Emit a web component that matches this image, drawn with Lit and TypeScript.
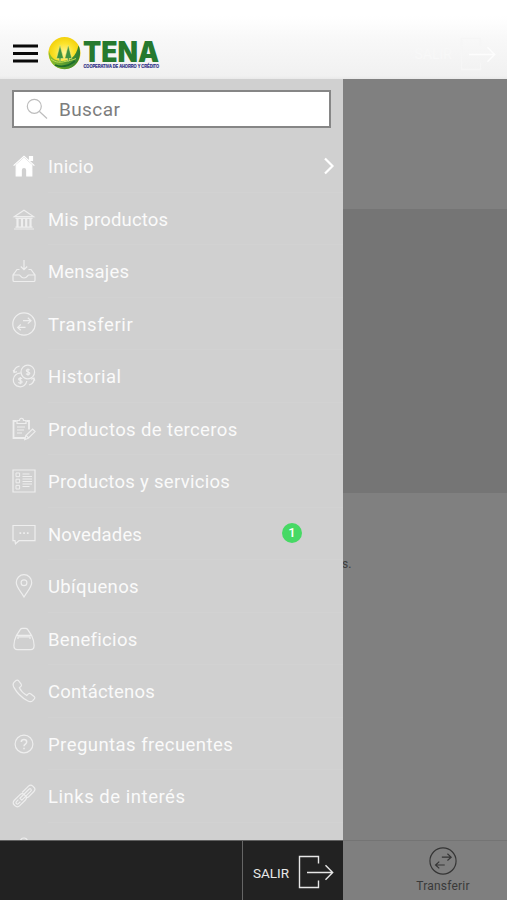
import { LitElement, html, svg, css, nothing, SVGTemplateResult } from "lit";
import { customElement, property } from "lit/decorators.js";

const transferIcon = svg`<circle cx="12" cy="12" r="11.2"/><path d="M11 8.700h8M15.800 5.800l3.200 2.900-3.200 2.900M13.500 15.400H5.600M8.800 12.500l-3.200 2.900 3.200 2.900"/>`;

const icons: Record<string, SVGTemplateResult> = {
  home: svg`<path d="M17.5 2.5h3v4h-3z" fill="currentColor"/><path d="M4.2 11.3 12 4.4l7.8 6.9V21.800h-5v-5.600c0-3.600-5.600-3.600-5.600 0v5.600H4.200z" fill="currentColor"/><path d="M1.600 11.600 12 2.300l10.400 9.300"/>`,
  bank: svg`<path d="M2.500 9.600 12 3.300l9.500 6.300zM2 22h20M3.500 20.200h17M3.500 11.300h17"/><path d="M5.500 11.500v8.500M10 11.500v8.500M14.200 11.500v8.500M18.500 11.500v8.500" stroke-width="2.200"/>`,
  inbox: svg`<path d="M12 1v9.500M8.800 7.500l3.200 3.200 3.200-3.200M7.500 10.500H5L1 16v5.200c0 .8.600 1.300 1.300 1.300h19.400c.8 0 1.300-.5 1.300-1.300V16l-4-5.500h-2.500M1 16h6.500c.8 0 1.500 3 4.500 3s3.700-3 4.500-3H23"/>`,
  transfer: transferIcon,
  history: svg`<circle cx="15.800" cy="8" r="6.800"/><path d="M8.700 9.200A6.800 6.800 0 1 0 14.800 17M2 8.500C2 5.500 4 3 7.500 2.200M1.300 6 2 8.600l3-1M22 14c.3 3.300-1.700 6-5 7M22.800 16.600 22 14l-2.800 1.200"/><path d="M17.700 6.200c-.8-1-3.400-1-3.400.5s3.500 1 3.500 2.600-2.800 1.600-3.800.4M16 4.500v7.200M10 14.800c-.8-1-3.400-1-3.400.5s3.500 1 3.500 2.600-2.800 1.600-3.800.4M8.300 13v7.200" stroke-width="1.200"/>`,
  clipboard: svg`<path d="M4.500 4H1.500v17h12M14.500 4h2.500v8.500" stroke-width="1.800"/><path d="M5 6.500v-3h2.500c0-3 4-3 4 0H14v3zM5 10h8M5 13h7M5 16h5M12.800 22.500l1-4 6.800-6.500 2.500 2.600-6.800 6.700zM14.200 18.500l2.200 2.400"/>`,
  list: svg`<path d="M1 1h22v22H1z"/><path d="M4 4h3.600v3.600H4zM4 10.200h3.600v3.600H4zM4 16.400h3.600V20H4zM10.500 5h7M10.500 7.500h9.500M10.500 10h9.500M10.500 12.500h9.500M10.500 15h9.500M10.500 17.500h7" stroke-width="1"/>`,
  chat: svg`<path d="M1 3.500h22v15.200H7L3.500 21.800 3 18.700H1z"/><path d="M7.500 11.200h1.700M11.200 11.200h1.700M14.900 11.200h1.700" stroke-width="1.700"/>`,
  pin: svg`<path d="M12 23C9 17.500 4.300 13.200 4.300 8.400a7.700 7.700 0 0 1 15.400 0c0 4.800-4.700 9.100-7.700 14.600z"/><circle cx="12" cy="8.700" r="2.900"/>`,
  bag: svg`<path d="M4.500 8.300h15c1.300 2.700 2.600 7 2.600 10.200 0 2.800-1.200 4.200-3.400 4.200H5.300c-2.200 0-3.400-1.400-3.400-4.200 0-3.200 1.300-7.500 2.600-10.200zM4.500 8.300 8.200 2.600c.6-.9 1.300-1.200 2.300-1.200h3c1 0 1.700.3 2.300 1.200l3.700 5.700M6 12V9.800h12V12"/>`,
  phone: svg`<path d="M2.200 3.100 4 1.500c.8-.7 1.800-.6 2.500.2l2.600 3.500c.5.800.4 1.700-.3 2.300L7.300 8.800c1.500 3 4.300 5.800 7.500 7.600l1.500-1.500c.7-.6 1.500-.7 2.300-.1l3.500 2.600c.8.600.9 1.700.2 2.500l-1.800 1.900c-1.400 1.400-3.400.9-5-.1C9.500 18.500 4.900 13.900 1.800 8.100 1 6.500.9 4.400 2.200 3.100z"/>`,
  help: svg`<circle cx="12" cy="12" r="8.900"/><path d="M9.300 10.100c0-3.400 5.400-3.400 5.400 0 0 2-2.700 2-2.700 4.200M12 15.800v1.500" stroke-width="1.500"/>`,
  link: svg`<g transform="rotate(-45 12 12)"><rect x="-1.200" y="8.200" width="14.400" height="7.600" rx="3"/><path d="M5.500 10.600H2.700c-1.900 0-1.900 2.800 0 2.800h2.800"/><path d="M13.200 8.200h9c2 0 3 1.200 3 3v1.600c0 1.800-1 3-3 3h-7.400c-1 0-1.700-.4-2.200-1"/><path d="M7.500 10.700h12.800c1.900 0 1.900 2.700 0 2.700H7.500z"/></g>`,
  lock: svg`<path d="M8.500 9V4.500a3.500 3.500 0 0 1 7 0V9M4 9h16v13H4z"/>`,
};

interface Entry { label: string; icon: string; spacing: number; badge?: number; open?: boolean }

const entries: Entry[] = [
  { label: "Inicio", icon: "home", spacing: 0.2, open: true },
  { label: "Mis productos", icon: "bank", spacing: 0.17 },
  { label: "Mensajes", icon: "inbox", spacing: 0.2 },
  { label: "Transferir", icon: "transfer", spacing: 0.62 },
  { label: "Historial", icon: "history", spacing: 0.5 },
  { label: "Productos de terceros", icon: "clipboard", spacing: 0.38 },
  { label: "Productos y servicios", icon: "list", spacing: 0.29 },
  { label: "Novedades", icon: "chat", spacing: 0.17, badge: 1 },
  { label: "Ubíquenos", icon: "pin", spacing: 0.35 },
  { label: "Beneficios", icon: "bag", spacing: 0.3 },
  { label: "Contáctenos", icon: "phone", spacing: 0.2 },
  { label: "Preguntas frecuentes", icon: "help", spacing: 0.45 },
  { label: "Links de interés", icon: "link", spacing: 0.53 },
  { label: "", icon: "lock", spacing: 0 },
];

@customElement("menu-row")
class MenuRow extends LitElement {
  @property({ attribute: false }) entry!: Entry;

  static styles = css`
    :host { display: flex; align-items: center; height: 52.5px; flex: none; padding-left: 12px; color: #fafafa; }
    .icon { width: 24px; height: 24px; flex: none; fill: none; stroke: currentColor; stroke-width: 1.2; color: #eee; }
    .solid { color: #fff; }
    .cell { flex: 1; align-self: stretch; margin-left: 12px; display: flex; align-items: center; border-bottom: 1px solid #d2d2d2; box-sizing: border-box; }
    .label { font-size: 18.5px; line-height: 24px; padding-top: 2.5px; white-space: nowrap; flex: 1; }
    .badge { width: 20px; height: 20px; border-radius: 50%; background: #46d964; font-size: 13px; line-height: 20px; text-align: center; font-weight: 500; color: #fff; margin-right: 41px; }
    .chevron { width: 12px; height: 18px; margin-right: 8px; fill: none; stroke: #fff; stroke-width: 2.2; }
  `;

  render() {
    const e = this.entry;
    return html`
      <svg class="icon ${e.open ? "solid" : ""}" viewBox="0 0 24 24">${icons[e.icon]}</svg>
      <div class="cell">
        <span class="label" style="letter-spacing:${e.spacing}px">${e.label}</span>
        ${e.badge ? html`<span class="badge">${e.badge}</span>` : nothing}
        ${e.open ? html`<svg class="chevron" viewBox="0 0 12 18"><path d="M2 1.500 9.500 9 2 16.500"/></svg>` : nothing}
      </div>`;
  }
}

@customElement("app-root")
class AppRoot extends LitElement {
  static styles = css`
    :host { display: grid; grid-template-rows: 79px 761px 60px; grid-template-columns: 343px 1fr; width: 507px; height: 900px; overflow: hidden; font-family: Roboto, "Liberation Sans", sans-serif; }
    .header { grid-column: 1 / 3; box-sizing: border-box; display: flex; align-items: flex-start; padding: 36px 11px 0 13px; background: linear-gradient(#fff 20%, #f8f8f8 50%, #f1f1f1 96%, #e9e9e9); }
    .burger { width: 25px; height: 19px; margin-top: 8px; fill: none; stroke: #0a0a0a; stroke-width: 2.800; }
    .logo { width: 112px; height: 36px; margin-left: 10px; overflow: visible; }
    .ghost { margin-left: auto; display: flex; align-items: center; gap: 8px; height: 36px; color: #f8f8f8; font-size: 14px; }
    .ghost svg { width: 36px; height: 34px; fill: none; stroke: #f6f6f6; stroke-width: 1.400; }
    .ghost .arrow { stroke: #fdfdfd; }
    .drawer { background: #d0d0d0; overflow: hidden; display: flex; flex-direction: column; }
    .search { flex: none; box-sizing: border-box; width: 319px; height: 38px; margin: 10.500px 0 12.500px 12px; background: #fff; border: 2px solid #868686; display: flex; align-items: center; padding-left: 12px; color: #7d7d7d; font-size: 19px; letter-spacing: .4px; }
    .search span { padding-top: 1px; }
    .search svg { width: 22px; height: 22px; margin-right: 11px; fill: none; stroke: #bdbdbd; stroke-width: 1.200; }
    .backdrop { display: grid; grid-template-rows: 130px 284px 1fr; background: #808080; overflow: hidden; }
    .banner { background: #757575; grid-row: 2; }
    .note { grid-row: 3; padding-top: 64px; margin-left: -1px; font-size: 12px; line-height: 14px; color: #3e3e3e; }
    .exit { background: #222; border-top: 1px solid #606060; display: flex; justify-content: flex-end; box-sizing: border-box; }
    .button { width: 101px; box-sizing: border-box; border-left: 1px solid #666; display: flex; align-items: center; padding: 3px 0 0 10px; color: #e8e8e8; font-size: 13.500px; letter-spacing: 0; }
    .button span { padding-top: 2px; width: 36px; }
    .button svg { width: 36px; height: 34px; margin-left: 9px; fill: none; stroke: #e6e6e6; stroke-width: 1.400; }
    .tab { border-top: 1px solid #747474; box-sizing: border-box; background: #7f7f7f; color: #3a3a3a; display: flex; flex-direction: column; align-items: center; padding: 6px 0 0 36px; font-size: 12px; line-height: 14px; letter-spacing: .2px; }
    .tab svg { width: 28px; height: 28px; fill: none; stroke: #353535; stroke-width: 1; margin-bottom: 4px; }
  `;

  private exitIcon() {
    return html`<svg viewBox="0 0 36 34"><path d="M20.500 8.500V1.500h-19v31h19v-7"/><path class="arrow" d="M9 17.500h25.500M27.500 10.200l7.200 7.300-7.200 7.300"/></svg>`;
  }

  render() {
    return html`
      <div class="header">
        <svg class="burger" viewBox="0 0 25 19"><path d="M0 2h25M0 9.500h25M0 17h25"/></svg>
        <svg class="logo" viewBox="0 0 112 36">
          <defs>
            <linearGradient id="leaf" x1="0" x2="1"><stop offset="0" stop-color="#8fc02c"/><stop offset="1" stop-color="#2c7d34"/></linearGradient>
            <radialGradient id="sun"><stop offset="0" stop-color="#fff59a"/><stop offset=".6" stop-color="#fbe32b"/><stop offset="1" stop-color="#f3d10d"/></radialGradient>
          </defs>
          <circle cx="16.500" cy="17" r="16" fill="url(#sun)"/>
          <path d="M.8 14.500C2.500 21 6 25 14 25c8 0 14-4 16.500-15.500C35 19 30 33 16.500 33.200 6.500 33-.2 25 .8 14.500z" fill="url(#leaf)"/>
          <path d="M3 23c5 4 10 3.500 14 2.500s7-1 11-3" fill="none" stroke="#c6de55" stroke-width="1"/>
          <path d="M12 9 8.500 22.500h2.700v2.500h1.600v-2.500h2.700zM20.300 9l-3.500 13.500h2.700v2.500h1.600v-2.500h2.700z" fill="#3f9440" stroke="#f5ec85" stroke-width=".5"/>
          <path d="M7 29c6 2.500 13 1.500 20-4" fill="none" stroke="#1d6c2d" stroke-width="1.600"/>
          <text x="35" y="26.300" font-family="Inter" font-weight="900" font-size="28" fill="#26792f" textLength="76" lengthAdjust="spacingAndGlyphs">TENA</text>
          <text x="35.500" y="32" font-family="Liberation Sans" font-weight="700" font-size="4.800" fill="#2b2c83" stroke="#2b2c83" stroke-width=".2" textLength="75.500" lengthAdjust="spacingAndGlyphs">COOPERATIVA DE AHORRO Y CRÉDITO</text>
        </svg>
        <div class="ghost"><span>SALIR</span>${this.exitIcon()}</div>
      </div>
      <div class="drawer">
        <div class="search">
          <svg viewBox="0 0 22 22"><circle cx="8.300" cy="8.300" r="7"/><path d="M13.200 13.200 21 20.500"/></svg>
          <span>Buscar</span>
        </div>
        ${entries.map((e) => html`<menu-row .entry=${e}></menu-row>`)}
      </div>
      <div class="backdrop">
        <div class="banner"></div>
        <div class="note">s.</div>
      </div>
      <div class="exit"><div class="button"><span>SALIR</span>${this.exitIcon()}</div></div>
      <div class="tab"><svg viewBox="0 0 24 24">${transferIcon}</svg><span>Transferir</span></div>
    `;
  }
}
